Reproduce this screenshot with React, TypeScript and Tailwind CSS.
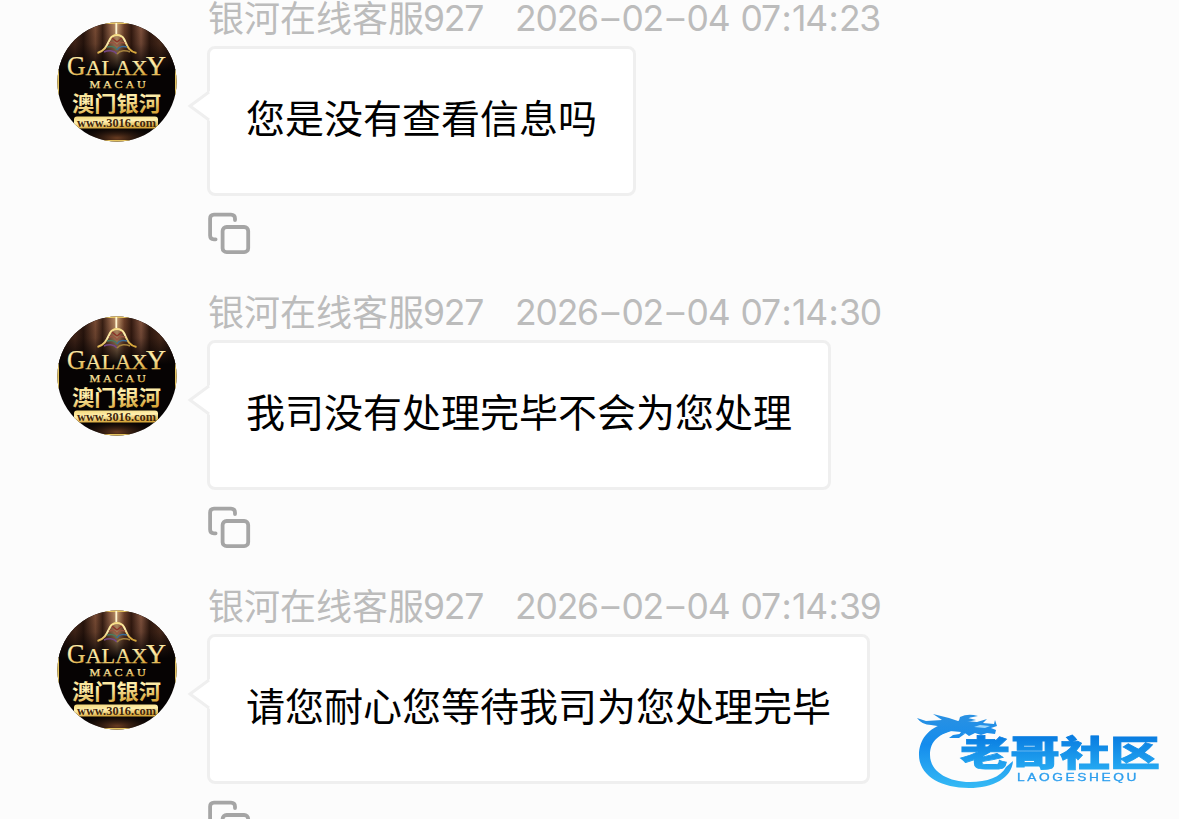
import React from "react";

type Message = { time: [string, string, string]; text: string };

const messages: Message[] = [
  { time: ["07", "14", "23"], text: "您是没有查看信息吗" },
  { time: ["07", "14", "30"], text: "我司没有处理完毕不会为您处理" },
  { time: ["07", "14", "39"], text: "请您耐心您等待我司为您处理完毕" },
];

function Avatar({ id }: { id: number }) {
  const gold = `url(#gold${id})`;
  return (
    <svg viewBox="0 0 120 120" className="block size-[120px]">
      <defs>
        <linearGradient id={`gold${id}`} x1="0" y1="0" x2="0.3" y2="1">
          <stop offset="0" stopColor="#f3d778" />
          <stop offset="0.5" stopColor="#fff0b0" />
          <stop offset="1" stopColor="#d8a83c" />
        </linearGradient>
        <linearGradient id={`fade${id}`} x1="0" y1="0" x2="0" y2="1">
          <stop offset="0" stopColor="#050202" stopOpacity="0" />
          <stop offset="0.45" stopColor="#050202" stopOpacity="0.2" />
          <stop offset="1" stopColor="#060303" />
        </linearGradient>
        <linearGradient id={`drape${id}`} x1="0" y1="0" x2="1" y2="0">
          <stop offset="0" stopColor="#1c0d08" />
          <stop offset="0.15" stopColor="#4b2a1c" />
          <stop offset="0.22" stopColor="#2a160e" />
          <stop offset="0.32" stopColor="#7d4e36" />
          <stop offset="0.38" stopColor="#3a2014" />
          <stop offset="0.44" stopColor="#8a5c42" />
          <stop offset="0.5" stopColor="#c89c70" />
          <stop offset="0.56" stopColor="#6d4029" />
          <stop offset="0.62" stopColor="#351b11" />
          <stop offset="0.7" stopColor="#865640" />
          <stop offset="0.77" stopColor="#321a10" />
          <stop offset="0.86" stopColor="#53301f" />
          <stop offset="1" stopColor="#1a0b07" />
        </linearGradient>
        <radialGradient id={`floor${id}`}>
          <stop offset="0" stopColor="#6b3d22" />
          <stop offset="1" stopColor="#050202" stopOpacity="0" />
        </radialGradient>
        <clipPath id={`disc${id}`}>
          <circle cx="60" cy="60" r="59.6" />
        </clipPath>
      </defs>
      <g clipPath={`url(#disc${id})`}>
        <rect width="120" height="120" fill="#060303" />
        <rect width="120" height="48" fill={`url(#drape${id})`} />
        <rect width="120" height="48.5" fill={`url(#fade${id})`} />
        <ellipse cx="60" cy="116" rx="44" ry="13" fill={`url(#floor${id})`} />
        <rect x="1" y="1" width="118" height="118" fill="none" stroke="#e5c35f" strokeWidth="2" />
        <path d="M59.3 1V12" stroke="#fff5d0" strokeWidth="1.8" />
        <path d="M40.5 31C48 29 50 23 53 17C56 11.5 64 11.5 67 17C70 23 71 29 79.5 31" fill="none" stroke={gold} strokeWidth="2" />
        <g fill="none" strokeWidth="1.5">
          <path d="M60 20L55 16M60 20L65 16" stroke="#8b3428" />
          <path d="M60 24C58 20 54 20 52 21M60 24C62 20 66 20 68 21" stroke="#9b5540" />
          <path d="M60 28C58 24 53 24 50 25" stroke="#477c61" />
          <path d="M60 28C62 24 67 24 70 25" stroke="#3a6c98" />
          <path d="M60 32C57 28 51 28 47 30" stroke="#734785" />
          <path d="M60 32C63 28 69 28 73 30" stroke="#a4813d" />
        </g>
        <g fill={gold} stroke={gold} strokeWidth="0.25" fontFamily="'Liberation Serif', serif">
          <text x="10" y="52.5" fontSize="28" textLength="18.5" lengthAdjust="spacingAndGlyphs">G</text>
          <text x="28.5" y="52.5" fontSize="22" textLength="62" lengthAdjust="spacingAndGlyphs">ALAX</text>
          <text x="89" y="52.5" fontSize="27" textLength="20" lengthAdjust="spacingAndGlyphs">Y</text>
          <text x="32.5" y="65.6" fontSize="10.5" letterSpacing="2.4" textLength="59" lengthAdjust="spacingAndGlyphs">MACAU</text>
        </g>
        <text x="15" y="88.5" fontSize="21" fontWeight="700" fill={gold} textLength="89" lengthAdjust="spacingAndGlyphs" fontFamily="'Noto Sans CJK SC', sans-serif">澳门银河</text>
        <path d="M20 94.5H98Q101 94.5 101 97.5V106.5H17V97.5Q17 94.5 20 94.5Z" fill={gold} />
        <text x="20" y="104.8" fontSize="12.5" fontWeight="700" fill="#40250c" textLength="79" lengthAdjust="spacingAndGlyphs" fontFamily="'Liberation Serif', serif">www.3016.com</text>
      </g>
    </svg>
  );
}

function CopyIcon() {
  return (
    <svg viewBox="0 0 43 43" className="block size-[43px]" fill="none" stroke="#a5a5a5" strokeWidth="3.8" strokeLinecap="round">
      <rect x="14.6" y="15" width="25.6" height="25.2" rx="4" />
      <path d="M27 8V6.5Q27 2.6 23 2.6H6Q2.1 2.6 2.1 6.5V23.5Q2.1 27.3 6 27.3H7.6" />
    </svg>
  );
}

function Timestamp({ time }: { time: Message["time"] }) {
  return (
    <div className="flex font-[Inter,sans-serif] text-[35.5px] leading-[37px] tracking-[-1.2px]">
      <span>2026</span>
      <span className="w-[23.5px] text-center">–</span>
      <span>02</span>
      <span className="w-[23.5px] text-center">–</span>
      <span>04</span>
      <span className="ml-[11px]">{time[0]}</span>
      <span className="w-[12px] text-center">:</span>
      <span>{time[1]}</span>
      <span className="w-[12px] text-center">:</span>
      <span>{time[2]}</span>
    </div>
  );
}

function MessageRow({ message, index }: { message: Message; index: number }) {
  return (
    <div className="flex h-[294px] shrink-0 items-start">
      <div className="ml-[57px] mt-[22px] w-[150px] shrink-0">
        <Avatar id={index} />
      </div>
      <div className="flex flex-col items-start">
        <div className="flex h-[46px] items-start whitespace-pre text-[#bcbcbc]">
          <div className="flex w-[308px] pl-px">
            <span className="-mt-[2px] font-['Noto_Sans_CJK_SC',sans-serif] text-[36px] leading-[37px]">银河在线客服</span>
            <span className="-ml-px font-[Inter,sans-serif] text-[35.5px] leading-[37px] tracking-[-1.2px]">927</span>
          </div>
          <Timestamp time={message.time} />
        </div>
        <div className="relative h-[150px] rounded-[8px] border-[3px] border-[#efefef] bg-white px-9 pt-[39px]">
          <svg viewBox="0 0 23 34" className="absolute -left-[23px] top-[40px] h-[34px] w-[23px]">
            <path d="M23 2L3 17L23 32Z" fill="#fff" />
            <path d="M22 3L3 17L22 31" fill="none" stroke="#efefef" strokeWidth="3" />
          </svg>
          <p className="whitespace-nowrap font-['Noto_Sans_CJK_SC',sans-serif] text-[39px] leading-[56px] text-black">{message.text}</p>
        </div>
        <div className="mt-4 ml-px">
          <CopyIcon />
        </div>
      </div>
    </div>
  );
}

function Watermark() {
  return (
    <svg viewBox="0 0 250 90" className="absolute left-[915px] top-[705px] h-[90px] w-[250px]">
      <defs>
        <linearGradient id="water" gradientUnits="userSpaceOnUse" x1="0" y1="10" x2="0" y2="84">
          <stop offset="0" stopColor="#2a91e2" />
          <stop offset="0.4" stopColor="#148ced" />
          <stop offset="1" stopColor="#36bbf5" />
        </linearGradient>
        <linearGradient id="word" x1="0" y1="0" x2="0" y2="1">
          <stop offset="0.2" stopColor="#087be0" />
          <stop offset="1" stopColor="#2bb2f5" />
        </linearGradient>
      </defs>
      <g fill="url(#water)" className="blur-[0.7px]">
        <path d="M31 18C13 23 4 35 4 50C4 70 25 83 54 83C78 83 97 73 98 56L91 62C86 72 72 77 55 77C32 77 15 66 15 50C15 36 24 28 42 25Z" />
        <path d="M2 13L11 16L27 15L18 9L34 13L43 16L57 10L51 16L62 17L72 14L68 18L79 19L80 15L82 21L76 23L81 25L80 29L72 28L66 30L60 28L54 31L50 28L43 31L46 27L35 26L24 30L29 22L16 20Q7 20 2 13Z" />
        <path d="M45 12Q53 8 63 11L53 13L61 15L43 19Z" />
        <path d="M65 20L75 21L70 23L59 22Z" fill="#9ed7fb" />
        <path d="M38 30L51 28L44 33L34 33Z" />
      </g>
      <g className="blur-[0.6px]">
        <text x="45" y="61.2" fontSize="35" fontWeight="900" fill="url(#word)" stroke="url(#word)" strokeWidth="0.8" textLength="200" lengthAdjust="spacingAndGlyphs" fontFamily="'Noto Sans CJK SC', sans-serif">老哥社区</text>
        <text x="102" y="75.5" fontSize="10.5" letterSpacing="2" fill="#2c9eee" stroke="#2c9eee" strokeWidth="0.3" textLength="122" lengthAdjust="spacingAndGlyphs" fontFamily="'Liberation Sans', sans-serif">LAOGESHEQU</text>
      </g>
    </svg>
  );
}

export default function App() {
  return (
    <main className="relative flex h-[819px] w-[1179px] flex-col overflow-hidden bg-[#fcfcfc]">
      {messages.map((message, index) => (
        <MessageRow key={message.text} message={message} index={index} />
      ))}
      <Watermark />
    </main>
  );
}
